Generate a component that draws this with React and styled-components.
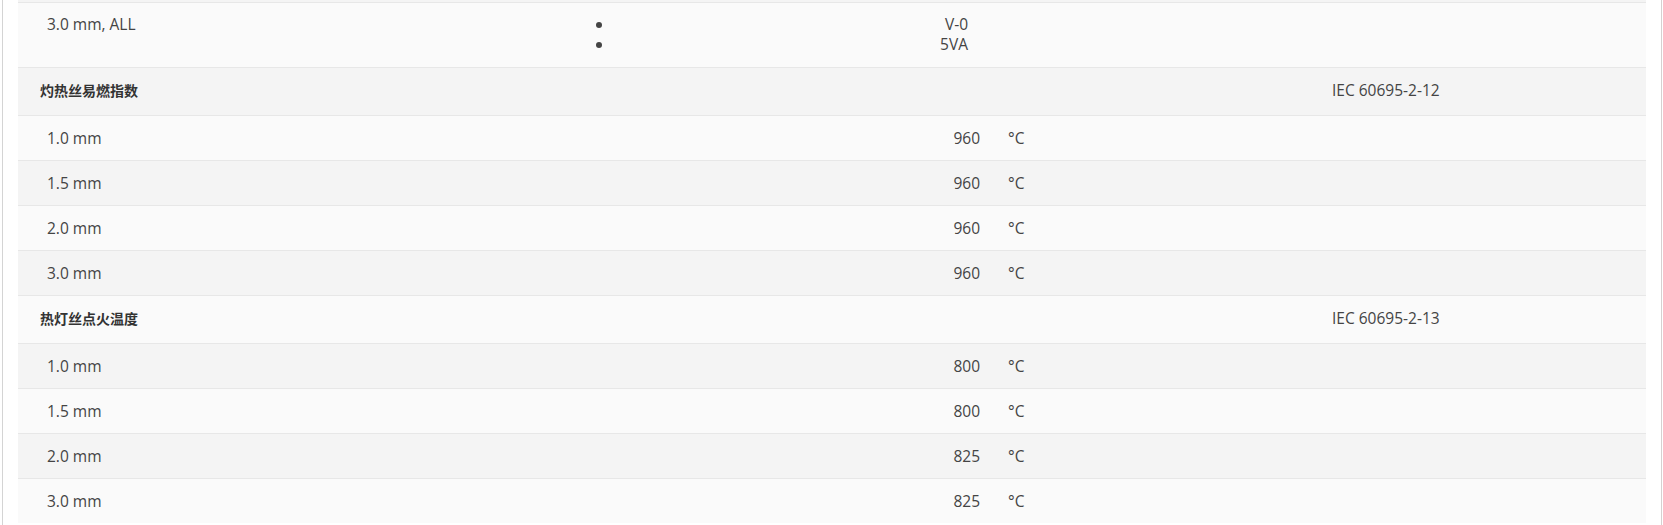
import React from 'react'
import styled, { createGlobalStyle } from 'styled-components'

const GlobalStyle = createGlobalStyle`
  html, body {
    margin: 0;
    padding: 0;
    background: #ffffff;
  }
  body {
    font-family: "Open Sans", "Noto Sans CJK SC", sans-serif;
    color: #444444;
  }
`;

const rows = [
    { type: 'data', label: '3.0 mm, ALL', list: ['V-0', '5VA'] },
    { type: 'group', label: '灼热丝易燃指数', standard: 'IEC 60695-2-12' },
    { type: 'data', label: '1.0 mm', value: '960', unit: '°C' },
    { type: 'data', label: '1.5 mm', value: '960', unit: '°C' },
    { type: 'data', label: '2.0 mm', value: '960', unit: '°C' },
    { type: 'data', label: '3.0 mm', value: '960', unit: '°C' },
    { type: 'group', label: '热灯丝点火温度', standard: 'IEC 60695-2-13' },
    { type: 'data', label: '1.0 mm', value: '800', unit: '°C' },
    { type: 'data', label: '1.5 mm', value: '800', unit: '°C' },
    { type: 'data', label: '2.0 mm', value: '825', unit: '°C' },
    { type: 'data', label: '3.0 mm', value: '825', unit: '°C' },
];

function PropertyTable() {
    return (
        <Frame>
            <Table>
                {/* tail of the row scrolled above */}
                <PrevRowTail />
                {rows.map((row, i) => (
                    <Row key={i} $shade={i % 2 === 1} $tall={!!row.list} $group={row.type === 'group'}>
                        {row.type === 'group' ? (
                            <GroupLabel>{row.label}</GroupLabel>
                        ) : (
                            <Label>{row.label}</Label>
                        )}
                        <Value>
                            {row.list ? (
                                <List>
                                    {row.list.map((item) => (
                                        <li key={item}>{item}</li>
                                    ))}
                                </List>
                            ) : (
                                row.value
                            )}
                        </Value>
                        <Unit>{row.unit}</Unit>
                        <Standard $group={row.type === 'group'}>{row.standard}</Standard>
                    </Row>
                ))}
            </Table>
        </Frame>
    );
}

export default function App() {
    return (
        <>
            <GlobalStyle />
            <PropertyTable />
        </>
    );
}

const Frame = styled.div`
    margin: 0 1px 0 2px;
    padding: 0 15px;
    border-left: 1px solid #d4d4d4;
    border-right: 1px solid #d6d0d0;
    height: 525px;
    box-sizing: border-box;
`;

const Table = styled.div`
    display: flex;
    flex-direction: column;
`;

const PrevRowTail = styled.div`
    height: 2px;
    background: #f4f4f4;
`;

const Row = styled.div`
    display: grid;
    grid-template-columns: 556px 421px 322px 328px;
    align-items: ${(p) => (p.$tall ? 'start' : 'center')};
    height: ${(p) => (p.$tall ? '40px' : p.$group ? '47px' : '44px')};
    padding: ${(p) => (p.$tall ? '11px 0 13px' : '0')};
    box-sizing: content-box;
    border-top: 1px solid #e7e7e7;
    background: ${(p) => (p.$shade ? '#f4f4f4' : '#fafafa')};
    font-size: 15.5px;
    line-height: 20px;
`;

const Label = styled.div`
    padding-left: 29px;
    color: #444444;
`;

const GroupLabel = styled.div`
    padding-left: 22px;
    padding-bottom: 3px;
    font-family: "Noto Sans CJK SC", sans-serif;
    font-size: 14px;
    font-weight: 700;
    color: #333333;
`;

const Value = styled.div`
    padding-right: 15px;
    text-align: right;
    color: #444444;
`;

const List = styled.ul`
    margin: 0;
    padding: 0 12px 0 40px;
    list-style: disc;
    text-align: right;
`;

const Unit = styled.div`
    padding-left: 13px;
    color: #444444;
`;

const Standard = styled.div`
    padding-left: 15px;
    padding-bottom: ${(p) => (p.$group ? '3px' : '0')};
    color: #444444;
`;
